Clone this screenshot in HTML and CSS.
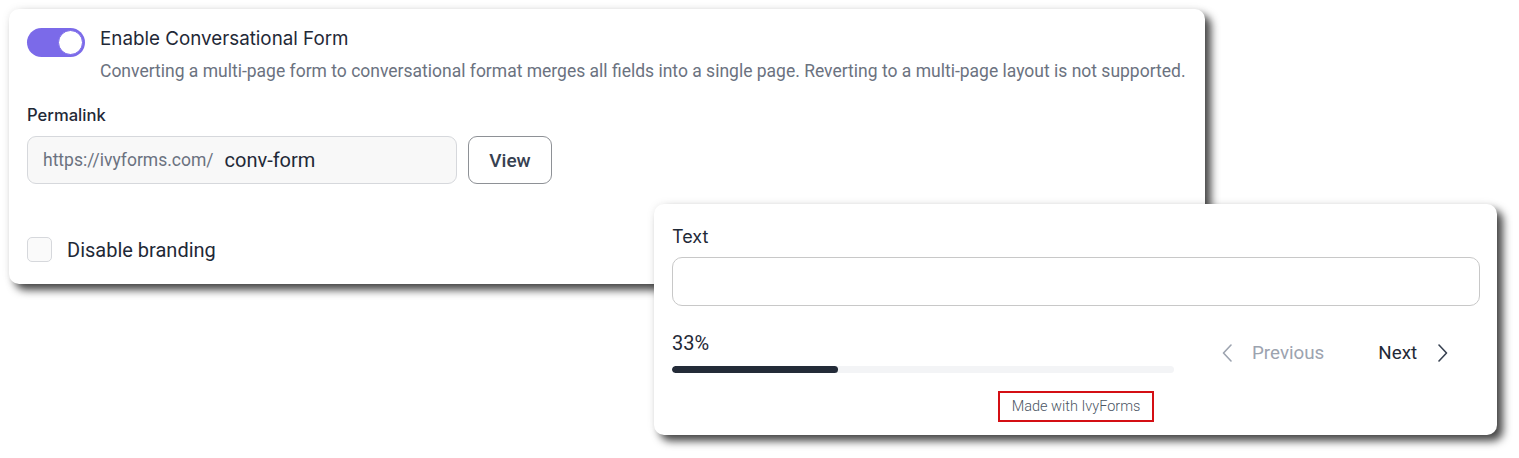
FILE: index.html
```html
<!DOCTYPE html>
<html lang="en">
<head>
<meta charset="utf-8">
<title>Conversational form settings</title>
<link rel="stylesheet" href="styles.css">
</head>
<body>
<main class="canvas">
  <section class="card settings">
    <div class="toggle-row">
      <span class="switch is-on"><span class="knob"></span></span>
      <div class="toggle-text">
        <div class="toggle-title">Enable Conversational Form</div>
        <div class="toggle-desc">Converting a multi-page form to conversational format merges all fields into a single page. Reverting to a multi-page layout is not supported.</div>
      </div>
    </div>

    <div class="field-label">Permalink</div>
    <div class="permalink-row">
      <div class="permalink-input">
        <span class="prefix">https://ivyforms.com/</span>
        <span class="slug">conv-form</span>
      </div>
      <button class="btn-outline">View</button>
    </div>

    <label class="check-row">
      <span class="checkbox"></span>
      <span class="check-label">Disable branding</span>
    </label>
  </section>

  <section class="card preview">
    <div class="q-label">Text</div>
    <div class="q-input"></div>
    <div class="preview-footer">
      <div class="progress">
        <div class="progress-value">33%</div>
        <div class="progress-track"><div class="progress-fill" style="width:33%"></div></div>
      </div>
      <nav class="pager">
        <span class="pager-btn is-disabled">
          <svg class="chev" viewBox="0 0 10 18" width="10" height="18"><path d="M9 1 L1.5 9 L9 17" fill="none" stroke="currentColor" stroke-width="1.6" stroke-linecap="round" stroke-linejoin="round"/></svg>
          <span>Previous</span>
        </span>
        <span class="pager-btn next">
          <span>Next</span>
          <svg class="chev" viewBox="0 0 10 18" width="10" height="18"><path d="M1 1 L8.5 9 L1 17" fill="none" stroke="currentColor" stroke-width="1.6" stroke-linecap="round" stroke-linejoin="round"/></svg>
        </span>
      </nav>
    </div>
    <div class="branding"><span class="branding-box">Made with IvyForms</span></div>
  </section>
</main>
</body>
</html>
```

FILE: styles.css
```css
* { box-sizing: border-box; }

html, body {
  margin: 0;
  background: #ffffff;
}

body {
  font-family: Roboto, "Liberation Sans", sans-serif;
  color: #1f2937;
}

.canvas {
  position: relative;
  width: 1519px;
  height: 458px;
  padding: 9px;
}

.card {
  background: #ffffff;
  border-radius: 10px;
  box-shadow: 6px 6px 9px rgba(0, 0, 0, 0.72), 0 0 10px rgba(0, 0, 0, 0.07);
}

/* settings panel */
.settings {
  width: 1196px;
  padding: 18px 18px 22px 18px;
}

.toggle-row {
  display: flex;
  gap: 15px;
}

.switch {
  flex: 0 0 58px;
  height: 29px;
  margin-top: 1px;
  border-radius: 15px;
  background: #7b6ae9;
  display: flex;
  align-items: center;
  justify-content: flex-end;
  padding: 2px;
}

.knob {
  width: 25px;
  height: 25px;
  border-radius: 50%;
  background: #ffffff;
  border: 1.5px solid #7b6ae9;
}

.toggle-title {
  font-family: Inter, Roboto, sans-serif;
  font-size: 18.8px;
  line-height: 24px;
  color: #1f2937;
}

.toggle-desc {
  margin-top: 8px;
  font-size: 17.5px;
  line-height: 24px;
  color: #6b7280;
}

.field-label {
  margin-top: 22px;
  font-family: Inter, Roboto, sans-serif;
  font-size: 16.6px;
  font-weight: 500;
  line-height: 20px;
  color: #1f2937;
}

.permalink-row {
  margin-top: 11px;
  display: flex;
  gap: 11px;
}

.permalink-input {
  width: 430px;
  height: 48px;
  border: 1px solid #d6d8dc;
  border-radius: 9px;
  background: #f8f8f8;
  display: flex;
  align-items: center;
  padding: 0 15px;
  gap: 11px;
}

.prefix {
  font-size: 17.5px;
  color: #6b7280;
}

.slug {
  font-size: 20px;
  color: #1f2937;
}

.btn-outline {
  width: 84px;
  height: 48px;
  border: 1px solid #8e9196;
  border-radius: 9px;
  background: #ffffff;
  font-family: Roboto, sans-serif;
  font-size: 19px;
  font-weight: 500;
  color: #374151;
}

.check-row {
  margin-top: 53px;
  display: flex;
  align-items: center;
  gap: 15px;
}

.checkbox {
  width: 25px;
  height: 25px;
  border: 1px solid #d6d8dc;
  border-radius: 5px;
  background: #fafafa;
}

.check-label {
  font-size: 20px;
  color: #1f2937;
}

/* floating preview of the conversational form */
.preview {
  position: absolute;
  left: 654px;
  top: 204px;
  width: 843px;
  padding: 21px 17px 13px 18px;
}

.q-label {
  font-family: Inter, Roboto, sans-serif;
  font-size: 18px;
  line-height: 24px;
  color: #1f2937;
}

.q-input {
  margin-top: 8px;
  height: 49px;
  border: 1px solid #c8c8c8;
  border-radius: 10px;
}

.preview-footer {
  margin-top: 26px;
  display: flex;
  align-items: center;
}

.progress {
  flex: 0 0 502px;
}

.progress-value {
  font-size: 20px;
  line-height: 22px;
}

.progress-track {
  margin-top: 12px;
  height: 7px;
  border-radius: 4px;
  background: #f3f4f6;
  overflow: hidden;
}

.progress-fill {
  height: 100%;
  border-radius: 4px;
  background: #232b38;
}

.pager {
  margin-left: 48px;
  display: flex;
  align-items: center;
  gap: 54px;
}

.pager-btn {
  display: flex;
  align-items: center;
  gap: 20px;
  font-size: 18.8px;
  color: #1f2937;
}

.pager-btn.next { gap: 21px; color: #1f2937; }
.pager-btn.next .chev { color: #374151; }

.pager-btn.is-disabled {
  color: #9ca3af;
}

.branding {
  margin-top: 18px;
  display: flex;
  justify-content: center;
}

.branding-box {
  border: 2px solid #d40f14;
  padding: 4px 12px;
  font-size: 14.5px;
  font-weight: 300;
  line-height: 19px;
  color: #4b5563;
}
```
